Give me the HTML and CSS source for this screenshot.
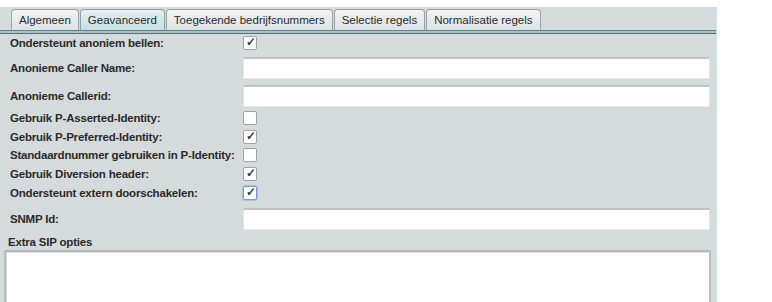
FILE: index.html
```html
<!DOCTYPE html>
<html lang="nl">
<head>
    <meta charset="UTF-8">
    <title>Geavanceerd</title>
    <link rel="stylesheet" href="styles.css">
</head>
<body>
    <div class="panel">
        <div class="tabs">
            <div class="tab">Algemeen</div>
            <div class="tab selected">Geavanceerd</div>
            <div class="tab">Toegekende bedrijfsnummers</div>
            <div class="tab">Selectie regels</div>
            <div class="tab">Normalisatie regels</div>
        </div>
        <div class="tab-line"></div>

        <div class="form">
            <label class="row r1">Ondersteunt anoniem bellen:</label>
            <div class="row r1"><span class="check on"></span></div>

            <label class="row r2">Anonieme Caller Name:</label>
            <div class="row r2"><span class="field"></span></div>

            <label class="row r3">Anonieme Callerid:</label>
            <div class="row r3"><span class="field"></span></div>

            <label class="row r4">Gebruik P-Asserted-Identity:</label>
            <div class="row r4"><span class="check"></span></div>

            <label class="row r5">Gebruik P-Preferred-Identity:</label>
            <div class="row r5"><span class="check on"></span></div>

            <label class="row r5">Standaardnummer gebruiken in P-Identity:</label>
            <div class="row r5"><span class="check"></span></div>

            <label class="row r4">Gebruik Diversion header:</label>
            <div class="row r4"><span class="check on"></span></div>

            <label class="row r5">Ondersteunt extern doorschakelen:</label>
            <div class="row r5"><span class="check on focus"></span></div>

            <label class="row r9">SNMP Id:</label>
            <div class="row r9"><span class="field"></span></div>
        </div>

        <div class="extra-label">Extra SIP opties</div>
        <div class="textarea"></div>
    </div>
</body>
</html>
```

FILE: styles.css
```css
body {
    margin: 0;
    background-color: #fff;
    font-family: "Liberation Sans", Arial, sans-serif;
    font-size: 12px;
    color: #222;
}

.panel {
    margin-top: 7px;
    width: 716px;
    height: 295px;
    background-color: #d5dbdd;
    border-right: 1px solid #c6e4ea;
    overflow: hidden;
}

.tabs {
    display: flex;
    padding: 2px 0 0 11px;
    height: 21px;
}

.tab {
    display: flex;
    align-items: center;
    padding: 0 7px;
    margin-right: 1px;
    background: linear-gradient(#f1f3f4, #dde2e4);
    border: 1px solid #9aa2a5;
    border-bottom: none;
    border-radius: 4px 4px 0 0;
    color: #2a2a2a;
    font-size: 11.5px;
}

.tab.selected {
    background: linear-gradient(#e3f0f1, #c5dfe2);
    border-color: #8ea3a8;
}

.tab-line {
    height: 2px;
    border-top: 1px solid #6a8288;
    border-bottom: 1px solid #56707a;
    background-color: #a6c4c8;
}

.form {
    display: grid;
    grid-template-columns: 233px 467px;
    grid-template-rows: 18px 32px 24px 20px 18px 18px 20px 18px 34px;
    padding-left: 10px;
}

.row {
    display: flex;
    align-items: center;
}

label.row {
    font-weight: bold;
    font-size: 11.5px;
    color: #2a2a2a;
    letter-spacing: -0.2px;
    white-space: nowrap;
}

.check {
    width: 12px;
    height: 12px;
    background-color: #fff;
    border: 1px solid #9da3a6;
    border-radius: 2px;
    position: relative;
}

.check.on::after {
    content: "\2713";
    position: absolute;
    left: 2px;
    top: -2px;
    font-size: 12px;
    font-weight: bold;
    color: #3a3a3a;
}

.check.focus {
    border-color: #7a9cc4;
    box-shadow: 0 0 0 1px #a9c2dd;
}

.field {
    width: 465px;
    height: 19px;
    background-color: #fff;
    border-top: 2px solid #bfc3c5;
    border-left: 1px solid #e3e5e6;
    border-right: 1px solid #e3e5e6;
    border-bottom: 1px solid #e8eaea;
}

.extra-label {
    padding-left: 8px;
    font-weight: bold;
    font-size: 11.5px;
    color: #2a2a2a;
    letter-spacing: -0.2px;
    height: 14px;
}

.textarea {
    margin-left: 4px;
    width: 703px;
    height: 60px;
    background-color: #fff;
    border: 2px solid #b4babd;
    border-bottom: none;
    box-shadow: inset 1px 1px 0 #d8dcdd;
}
```
